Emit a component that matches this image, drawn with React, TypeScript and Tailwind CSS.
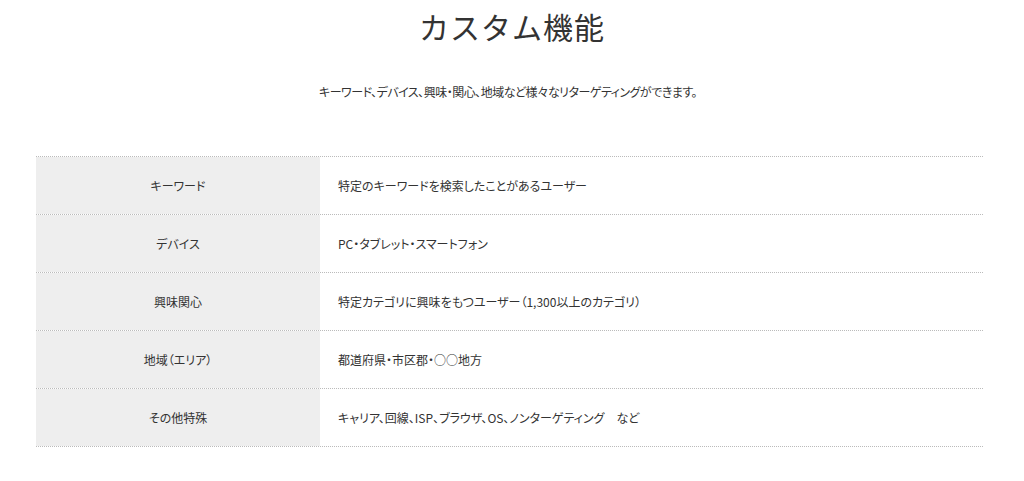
import React from "react";

const rows: [string, string][] = [
  ["キーワード", "特定のキーワードを検索したことがあるユーザー"],
  ["デバイス", "PC・タブレット・スマートフォン"],
  ["興味関心", "特定カテゴリに興味をもつユーザー（1,300以上のカテゴリ）"],
  ["地域（エリア）", "都道府県・市区郡・○○地方"],
  ["その他特殊", "キャリア、回線、ISP、ブラウザ、OS、ノンターゲティング　など"],
];

export default function App() {
  return (
    <div
      className="w-[1024px] h-[481px] bg-white text-[#333] [font-feature-settings:'palt']"
      style={{ fontFamily: '"Noto Sans CJK JP", "Noto Sans", sans-serif' }}
    >
      <h1
        className="pt-[11px] text-center text-[30px] leading-[36px] tracking-[1px] text-[#333] [font-feature-settings:normal]"
        style={{ fontFamily: '"Liberation Serif", "Noto Sans CJK JP", serif' }}
      >
        カスタム機能
      </h1>
      <p className="mt-[36px] text-center text-[12px] leading-[18px] pr-[8px] tracking-[-0.5px]">
        キーワード、デバイス、興味・関心、地域など様々なリターゲティングができます。
      </p>
      <div className="ml-[36px] mt-[55px] w-[947px] border-t border-dotted border-[#bbb]">
        {rows.map(([k, v]) => (
          <div key={k} className="flex h-[58px] border-b border-dotted border-[#bbb] text-[12px]">
            <div className="flex w-[284px] items-center justify-center bg-[#eeeeee]">{k}</div>
            <div className="flex flex-1 items-center pl-[18px]">{v}</div>
          </div>
        ))}
      </div>
    </div>
  );
}
